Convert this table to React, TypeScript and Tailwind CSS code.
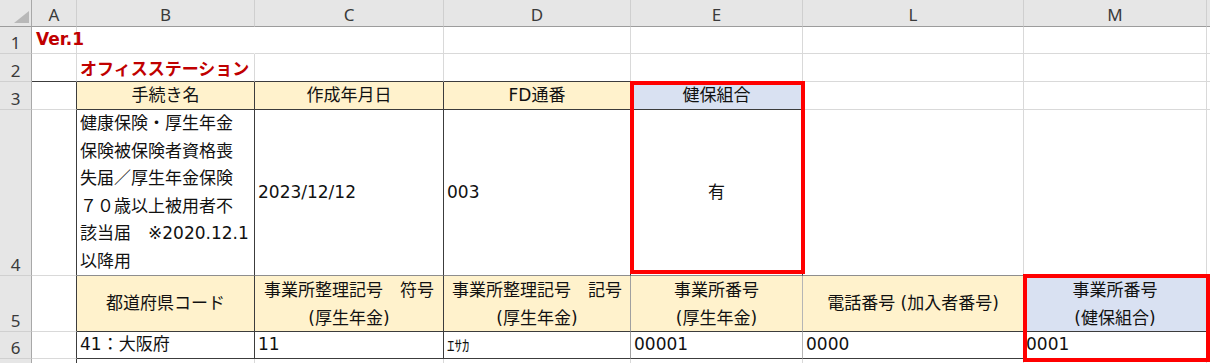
import React from "react";

type P = { className?: string; children?: React.ReactNode };

const Cell = ({ className = "", children }: P) => (
  <div className={`border-r border-b overflow-visible whitespace-nowrap ${className}`}>{children}</div>
);

const RowHdr = ({ n }: { n: string }) => (
  <div className="flex items-end justify-center pb-[2px] bg-[#E6E6E6] border-r border-r-[#A8A8A8] border-b border-b-[#D0D0D0] font-['Noto_Sans',sans-serif] text-[17px] text-[#3A3A3A] leading-none">
    {n}
  </div>
);

const ColHdr = ({ l }: { l: string }) => (
  <div className="flex items-end justify-center pb-[3px] bg-[#E6E6E6] border-r border-r-[#CFCFCF] border-b border-b-[#9C9C9C] font-['Noto_Sans',sans-serif] text-[17px] text-[#3A3A3A] leading-none">
    {l}
  </div>
);

const G = "border-[#D9D9D9]";

export default function App() {
  return (
    <div className="relative w-[1210px] h-[363px] overflow-hidden bg-white font-['DejaVu_Sans','Noto_Sans_CJK_JP',sans-serif] text-[#111] text-[16px]">
      <div className="grid grid-cols-[32px_45px_178px_189px_187px_172px_221px_183px_1fr] grid-rows-[27px_27px_28px_28px_166px_56px_27px_1fr] w-full h-full">
        {/* header row */}
        <div className="relative bg-[#E6E6E6] border-r border-r-[#A8A8A8] border-b border-b-[#9C9C9C]">
          <svg className="absolute right-[2px] bottom-[3px]" width="15" height="12" viewBox="0 0 15 12">
            <polygon points="15,0 15,12 0,12" fill="#B8B8B8" />
          </svg>
        </div>
        <ColHdr l="A" />
        <ColHdr l="B" />
        <ColHdr l="C" />
        <ColHdr l="D" />
        <ColHdr l="E" />
        <ColHdr l="L" />
        <ColHdr l="M" />
        <div className="bg-[#E6E6E6] border-b border-b-[#9C9C9C]" />

        {/* row 1 */}
        <RowHdr n="1" />
        <Cell className={`${G} flex items-center pl-[4px] text-[#C00000] font-bold text-[17px] relative z-10`}>Ver.1</Cell>
        <Cell className={`${G} border-r-transparent`} />
        <Cell className={G} />
        <Cell className={G} />
        <Cell className={G} />
        <Cell className={G} />
        <Cell className={G} />
        <Cell className={`${G} border-r-0`} />

        {/* row 2 */}
        <RowHdr n="2" />
        <Cell className={`${G} border-b-[#3C3C3C]`} />
        <Cell className={`${G} border-b-[#3C3C3C] flex items-center pl-[3px] text-[#C00000] font-bold text-[17px] font-['Noto_Sans_CJK_JP',sans-serif]`}>
          オフィスステーション
        </Cell>
        <Cell className={`${G} border-b-[#3C3C3C]`} />
        <Cell className={`${G} border-b-[#3C3C3C]`} />
        <Cell className={`${G} border-b-[#3C3C3C]`} />
        <Cell className={G} />
        <Cell className={G} />
        <Cell className={`${G} border-r-0`} />

        {/* row 3 */}
        <RowHdr n="3" />
        <Cell className={`${G} border-r-[#3C3C3C]`} />
        <Cell className="border-[#3C3C3C] bg-[#FFF2CC] flex items-center justify-center text-[17px] leading-none">手続き名</Cell>
        <Cell className="border-[#3C3C3C] bg-[#FFF2CC] flex items-center justify-center text-[17px] leading-none">作成年月日</Cell>
        <Cell className="border-[#3C3C3C] bg-[#FFF2CC] flex items-center justify-center text-[17px] leading-none">FD通番</Cell>
        <Cell className="border-[#3C3C3C] bg-[#D9E1F2] flex items-center justify-center text-[17px] leading-none">健保組合</Cell>
        <Cell className={G} />
        <Cell className={G} />
        <Cell className={`${G} border-r-0`} />

        {/* row 4 */}
        <RowHdr n="4" />
        <Cell className={`${G} border-r-[#3C3C3C]`} />
        <Cell className="border-r-[#3C3C3C] border-b-[#8E8E8E] pl-[3px] text-[17px] leading-[27.5px]">
          <div>健康保険・厚生年金</div>
          <div>保険被保険者資格喪</div>
          <div>失届／厚生年金保険</div>
          <div>７０歳以上被用者不</div>
          <div>該当届　※2020.12.1</div>
          <div>以降用</div>
        </Cell>
        <Cell className="border-r-[#3C3C3C] border-b-[#8E8E8E] flex items-center pl-[3px] text-[17px]">2023/12/12</Cell>
        <Cell className="border-r-[#3C3C3C] border-b-[#8E8E8E] flex items-center pl-[3px] text-[17px]">003</Cell>
        <Cell className="border-r-[#3C3C3C] border-b-[#8E8E8E] flex items-center justify-center text-[17px]">有</Cell>
        <Cell className={`${G} border-b-[#8E8E8E]`} />
        <Cell className={`${G} border-b-[#8E8E8E]`} />
        <Cell className={`${G} border-r-0`} />

        {/* row 5 */}
        <RowHdr n="5" />
        <Cell className={`${G} border-r-[#3C3C3C]`} />
        <Cell className="border-[#3C3C3C] bg-[#FFF2CC] flex items-center justify-center text-[17px]">都道府県コード</Cell>
        <Cell className="border-[#3C3C3C] bg-[#FFF2CC] flex flex-col items-center justify-center text-[17px] leading-[28px]">
          <div>事業所整理記号　符号</div>
          <div>(厚生年金)</div>
        </Cell>
        <Cell className="border-r-[#A0A0A0] border-b-[#3C3C3C] bg-[#FFF2CC] flex flex-col items-center justify-center text-[17px] leading-[28px]">
          <div>事業所整理記号　記号</div>
          <div>(厚生年金)</div>
        </Cell>
        <Cell className="border-r-[#B5B5B5] border-b-[#3C3C3C] bg-[#FFF2CC] flex flex-col items-center justify-center text-[17px] leading-[28px]">
          <div>事業所番号</div>
          <div>(厚生年金)</div>
        </Cell>
        <Cell className="border-[#3C3C3C] bg-[#FFF2CC] flex items-center justify-center text-[17px]">電話番号 (加入者番号)</Cell>
        <Cell className="border-[#3C3C3C] bg-[#D9E1F2] flex flex-col items-center justify-center text-[17px] leading-[28px]">
          <div>事業所番号</div>
          <div>(健保組合)</div>
        </Cell>
        <div className="border-b border-b-[#D9D9D9]" />

        {/* row 6 */}
        <RowHdr n="6" />
        <Cell className={`${G} border-r-[#3C3C3C]`} />
        <Cell className="border-[#3C3C3C] flex items-center pl-[3px] text-[17px]">41：大阪府</Cell>
        <Cell className="border-[#3C3C3C] flex items-center pl-[3px] text-[17px]">11</Cell>
        <Cell className="border-r-[#A0A0A0] border-b-[#3C3C3C] flex items-center pl-[3px] text-[15px] font-['Noto_Sans_CJK_JP',sans-serif]">ｴｻｶ</Cell>
        <Cell className="border-r-[#B5B5B5] border-b-[#3C3C3C] flex items-center pl-[3px] text-[17px]">00001</Cell>
        <Cell className="border-[#3C3C3C] flex items-center pl-[3px] text-[17px]">0000</Cell>
        <Cell className="border-[#3C3C3C] flex items-center pl-[2px] text-[17px]">0001</Cell>
        <div className="border-b border-b-[#D9D9D9]" />

        {/* row 7 partial */}
        <div className="bg-[#E6E6E6] border-r border-r-[#A8A8A8]" />
        <div className={`border-r ${G} border-r-[#3C3C3C]`} />
        <div className={`border-r ${G}`} />
        <div className={`border-r ${G}`} />
        <div className={`border-r ${G}`} />
        <div className={`border-r ${G}`} />
        <div className={`border-r ${G}`} />
        <div className={`border-r ${G}`} />
        <div />
      </div>

      {/* red highlight boxes */}
      <div className="absolute left-[630px] top-[81px] w-[175px] h-[193px] border-[4px] border-[#FF0000] pointer-events-none" />
      <div className="absolute left-[1023px] top-[274px] w-[187px] h-[88px] border-[4px] border-[#FF0000] pointer-events-none" />
    </div>
  );
}
